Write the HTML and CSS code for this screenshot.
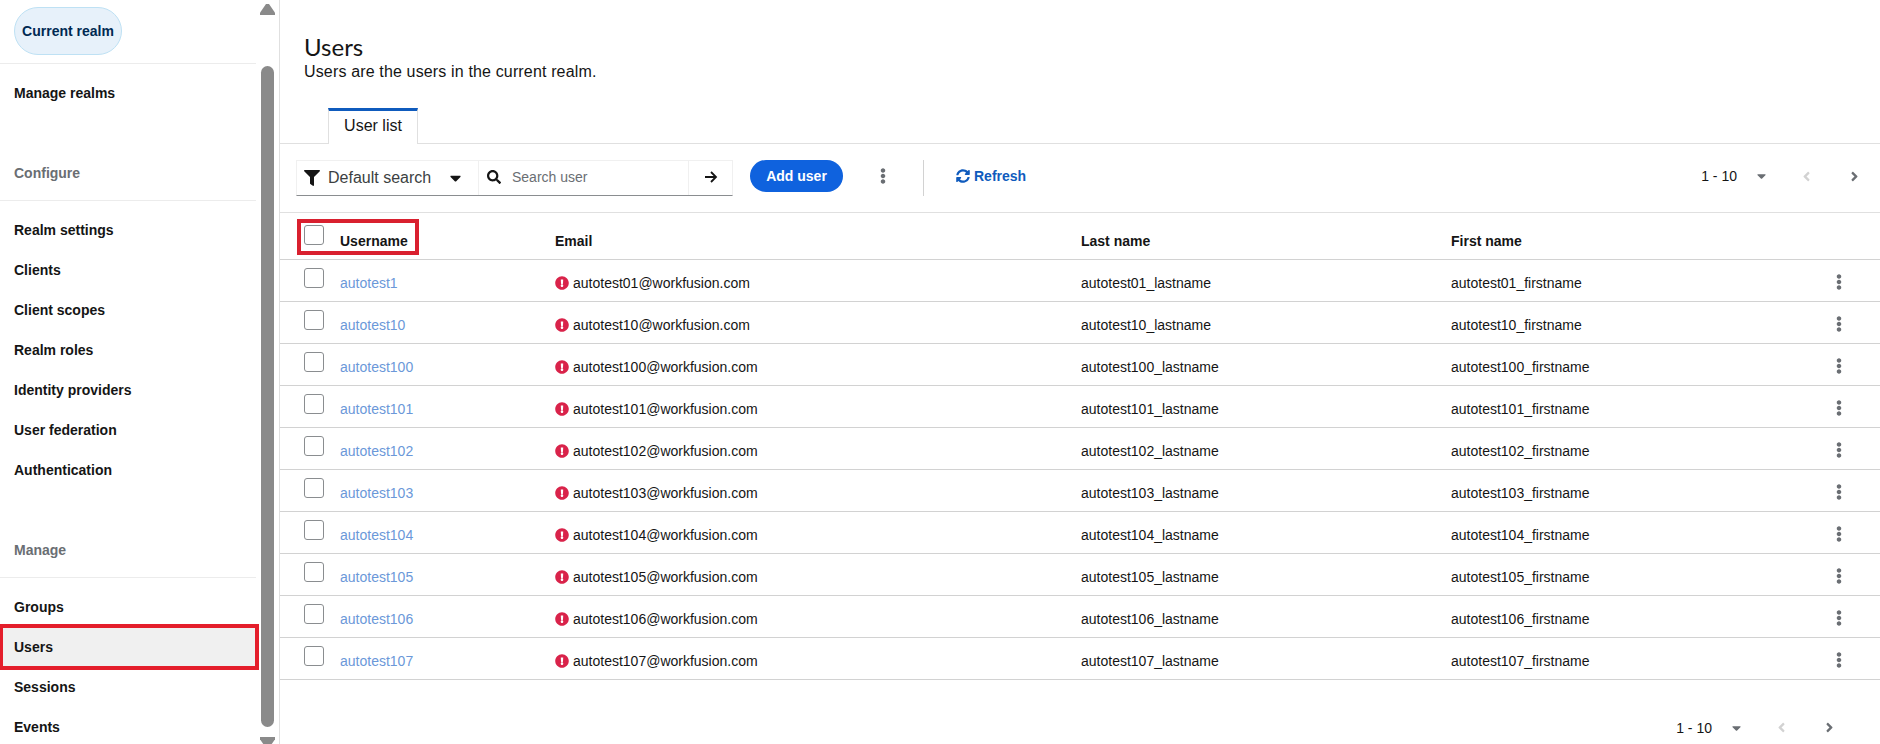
FILE: index.html
```html
<!DOCTYPE html>
<html lang="en">
<head>
  <meta charset="UTF-8" />
  <title>Users</title>
  <link rel="stylesheet" href="styles.css">
</head>
<body>
  <!-- icon sprite -->
  <svg class="sprite" xmlns="http://www.w3.org/2000/svg">
    <symbol id="i-filter" viewBox="0 0 512 512"><path d="M487.976 0H24.028C2.71 0-8.047 25.866 7.058 40.971L192 225.941V432c0 7.831 3.821 15.17 10.237 19.662l80 55.98C298.02 518.69 320 507.493 320 487.98V225.941l184.947-184.97C520.021 25.896 509.338 0 487.976 0z"/></symbol>
    <symbol id="i-search" viewBox="0 0 512 512"><path d="M505 442.7L405.3 343c-4.5-4.5-10.6-7-17-7H372c27.6-35.3 44-79.7 44-128C416 93.1 322.9 0 208 0S0 93.1 0 208s93.1 208 208 208c48.3 0 92.7-16.4 128-44v16.3c0 6.4 2.5 12.5 7 17l99.7 99.7c9.4 9.4 24.6 9.4 33.9 0l28.3-28.3c9.4-9.4 9.4-24.6.1-34zM208 336c-70.7 0-128-57.2-128-128 0-70.7 57.2-128 128-128 70.7 0 128 57.2 128 128 0 70.7-57.2 128-128 128z"/></symbol>
    <symbol id="i-arrow" viewBox="0 0 14 14"><path d="M1 7h11M7 2l5 5-5 5" fill="none" stroke="currentColor" stroke-width="1.8"/></symbol>
    <symbol id="i-caret" viewBox="0 0 320 512"><path d="M31.3 192h257.3c17.8 0 26.7 21.5 14.1 34.1L174.1 354.8c-7.8 7.8-20.5 7.8-28.3 0L17.2 226.1C4.6 213.5 13.5 192 31.3 192z"/></symbol>
    <symbol id="i-sync" viewBox="0 0 512 512"><path d="M370.72 133.28C339.458 104.008 298.888 87.962 255.848 88c-77.458.068-144.328 53.178-162.791 126.85-1.344 5.363-6.122 9.15-11.651 9.15H24.103c-7.498 0-13.194-6.807-11.807-14.176C33.933 94.924 134.813 8 256 8c66.448 0 126.791 26.136 171.315 68.685L463.03 40.97C478.149 25.851 504 36.559 504 57.941V192c0 13.255-10.745 24-24 24H345.941c-21.382 0-32.09-25.851-16.971-40.971l41.75-41.749zM32 296h134.059c21.382 0 32.09 25.851 16.971 40.971l-41.75 41.75c31.262 29.273 71.835 45.319 114.876 45.28 77.418-.07 144.315-53.144 162.787-126.849 1.344-5.363 6.122-9.15 11.651-9.15h57.304c7.498 0 13.194 6.807 11.807 14.176C478.067 417.076 377.187 504 256 504c-66.448 0-126.791-26.136-171.315-68.685L48.97 471.03C33.851 486.149 8 475.441 8 454.059V320c0-13.255 10.745-24 24-24z"/></symbol>
    <symbol id="i-kebab" viewBox="0 0 192 512"><path d="M96 184c39.8 0 72 32.2 72 72s-32.2 72-72 72-72-32.2-72-72 32.2-72 72-72zM24 80c0 39.8 32.2 72 72 72s72-32.2 72-72S135.8 8 96 8 24 40.2 24 80zm0 352c0 39.8 32.2 72 72 72s72-32.2 72-72-32.2-72-72-72-72 32.2-72 72z"/></symbol>
    <symbol id="i-alert" viewBox="0 0 512 512"><path d="M504 256c0 136.997-111.043 248-248 248S8 392.997 8 256C8 119.083 119.043 8 256 8s248 111.083 248 248zm-248 50c-25.405 0-46 20.595-46 46s20.595 46 46 46 46-20.595 46-46-20.595-46-46-46zm-43.673-165.346l7.418 136c.347 6.364 5.609 11.346 11.982 11.346h48.546c6.373 0 11.635-4.982 11.982-11.346l7.418-136c.375-6.874-5.098-12.654-11.982-12.654h-63.383c-6.884 0-12.356 5.78-11.981 12.654z"/></symbol>
    <symbol id="i-left" viewBox="0 0 256 512"><path d="M31.7 239l136-136c9.4-9.4 24.6-9.4 33.9 0l22.6 22.6c9.4 9.4 9.4 24.6 0 33.9L127.9 256l96.4 96.4c9.4 9.4 9.4 24.6 0 33.9L201.7 409c-9.4 9.4-24.6 9.4-33.9 0l-136-136c-9.5-9.4-9.5-24.6-.1-34z"/></symbol>
    <symbol id="i-right" viewBox="0 0 256 512"><path d="M224.3 273l-136 136c-9.4 9.4-24.6 9.4-33.9 0l-22.6-22.6c-9.4-9.4-9.4-24.6 0-33.9l96.4-96.4-96.4-96.4c-9.4-9.4-9.4-24.6 0-33.9L54.3 103c9.4-9.4 24.6-9.4 33.9 0l136 136c9.5 9.4 9.5 24.6.1 34z"/></symbol>
  </svg>

  <div class="page">
    <!-- Sidebar -->
    <aside class="sidebar">
      <nav class="nav">
        <div class="realm-box"><span class="realm-pill">Current realm</span></div>
        <a class="nav-item nav-first">Manage realms</a>

        <div class="nav-title">Configure</div>
        <a class="nav-item">Realm settings</a>
        <a class="nav-item">Clients</a>
        <a class="nav-item">Client scopes</a>
        <a class="nav-item">Realm roles</a>
        <a class="nav-item">Identity providers</a>
        <a class="nav-item">User federation</a>
        <a class="nav-item">Authentication</a>

        <div class="nav-title">Manage</div>
        <a class="nav-item">Groups</a>
        <a class="nav-item nav-current">Users</a>
        <a class="nav-item">Sessions</a>
        <a class="nav-item">Events</a>
      </nav>
      <div class="scrollbar">
        <span class="scroll-up"></span>
        <span class="scroll-thumb"></span>
        <span class="scroll-down"></span>
      </div>
    </aside>

    <!-- Main -->
    <main class="main">
      <header class="page-head">
        <h1>Users</h1>
        <p>Users are the users in the current realm.</p>
      </header>

      <div class="tabs">
        <div class="tab">User list</div>
      </div>

      <div class="toolbar">
        <div class="search-group">
          <div class="search-type">
            <svg class="icon filter-icon"><use href="#i-filter"/></svg>
            <span>Default search</span>
            <svg class="icon type-caret"><use href="#i-caret"/></svg>
          </div>
          <div class="search-input">
            <svg class="icon search-icon"><use href="#i-search"/></svg>
            <span>Search user</span>
          </div>
          <div class="search-go"><svg class="icon"><use href="#i-arrow"/></svg></div>
        </div>
        <button class="add-user">Add user</button>
        <svg class="icon kebab toolbar-kebab"><use href="#i-kebab"/></svg>
        <span class="toolbar-sep"></span>
        <a class="refresh"><svg class="icon"><use href="#i-sync"/></svg>Refresh</a>
        <div class="pager pager-top">
          <span>1 - 10</span>
          <svg class="icon pager-caret"><use href="#i-caret"/></svg>
          <svg class="icon pager-prev"><use href="#i-left"/></svg>
          <svg class="icon pager-next"><use href="#i-right"/></svg>
        </div>
      </div>

      <table class="users">
        <colgroup>
          <col class="col-check"><col class="col-name"><col class="col-email"><col class="col-last"><col class="col-first"><col class="col-menu">
        </colgroup>
        <thead>
          <tr>
            <th><span class="check"></span></th>
            <th>Username</th>
            <th>Email</th>
            <th>Last name</th>
            <th>First name</th>
            <th></th>
          </tr>
        </thead>
        <tbody>
          <tr><td><span class="check"></span></td><td><a>autotest1</a></td><td><svg class="icon alert"><use href="#i-alert"/></svg>autotest01@workfusion.com</td><td>autotest01_lastname</td><td>autotest01_firstname</td><td><svg class="icon kebab"><use href="#i-kebab"/></svg></td></tr>
          <tr><td><span class="check"></span></td><td><a>autotest10</a></td><td><svg class="icon alert"><use href="#i-alert"/></svg>autotest10@workfusion.com</td><td>autotest10_lastname</td><td>autotest10_firstname</td><td><svg class="icon kebab"><use href="#i-kebab"/></svg></td></tr>
          <tr><td><span class="check"></span></td><td><a>autotest100</a></td><td><svg class="icon alert"><use href="#i-alert"/></svg>autotest100@workfusion.com</td><td>autotest100_lastname</td><td>autotest100_firstname</td><td><svg class="icon kebab"><use href="#i-kebab"/></svg></td></tr>
          <tr><td><span class="check"></span></td><td><a>autotest101</a></td><td><svg class="icon alert"><use href="#i-alert"/></svg>autotest101@workfusion.com</td><td>autotest101_lastname</td><td>autotest101_firstname</td><td><svg class="icon kebab"><use href="#i-kebab"/></svg></td></tr>
          <tr><td><span class="check"></span></td><td><a>autotest102</a></td><td><svg class="icon alert"><use href="#i-alert"/></svg>autotest102@workfusion.com</td><td>autotest102_lastname</td><td>autotest102_firstname</td><td><svg class="icon kebab"><use href="#i-kebab"/></svg></td></tr>
          <tr><td><span class="check"></span></td><td><a>autotest103</a></td><td><svg class="icon alert"><use href="#i-alert"/></svg>autotest103@workfusion.com</td><td>autotest103_lastname</td><td>autotest103_firstname</td><td><svg class="icon kebab"><use href="#i-kebab"/></svg></td></tr>
          <tr><td><span class="check"></span></td><td><a>autotest104</a></td><td><svg class="icon alert"><use href="#i-alert"/></svg>autotest104@workfusion.com</td><td>autotest104_lastname</td><td>autotest104_firstname</td><td><svg class="icon kebab"><use href="#i-kebab"/></svg></td></tr>
          <tr><td><span class="check"></span></td><td><a>autotest105</a></td><td><svg class="icon alert"><use href="#i-alert"/></svg>autotest105@workfusion.com</td><td>autotest105_lastname</td><td>autotest105_firstname</td><td><svg class="icon kebab"><use href="#i-kebab"/></svg></td></tr>
          <tr><td><span class="check"></span></td><td><a>autotest106</a></td><td><svg class="icon alert"><use href="#i-alert"/></svg>autotest106@workfusion.com</td><td>autotest106_lastname</td><td>autotest106_firstname</td><td><svg class="icon kebab"><use href="#i-kebab"/></svg></td></tr>
          <tr><td><span class="check"></span></td><td><a>autotest107</a></td><td><svg class="icon alert"><use href="#i-alert"/></svg>autotest107@workfusion.com</td><td>autotest107_lastname</td><td>autotest107_firstname</td><td><svg class="icon kebab"><use href="#i-kebab"/></svg></td></tr>
        </tbody>
      </table>
      <!-- red annotation box from the screenshot -->
      <span class="mark-header"></span>

      <div class="pager pager-bottom">
        <span>1 - 10</span>
        <svg class="icon pager-caret"><use href="#i-caret"/></svg>
        <svg class="icon pager-prev"><use href="#i-left"/></svg>
        <svg class="icon pager-next"><use href="#i-right"/></svg>
      </div>
    </main>
  </div>
</body>
</html>
```
FILE: styles.css
```css
html, body {
  margin: 0;
  padding: 0;
  height: 100%;
  background: #fff;
  overflow: hidden;
  font-family: "Liberation Sans", Arial, sans-serif;
  font-size: 14px;
  color: #151515;
}

.sprite {
  display: none;
}

.icon {
  display: block;
  width: 14px;
  height: 14px;
  fill: currentColor;
  flex: none;
}

.page {
  display: flex;
  height: 744px;
  overflow: hidden;
}

/* Sidebar */
.sidebar {
  display: flex;
  flex: none;
  box-sizing: border-box;
  width: 280px;
  height: 744px;
  border-right: 1px solid #e0e0e0;
  overflow: hidden;
}

.nav {
  width: 256px;
  flex: none;
}

.realm-box {
  box-sizing: border-box;
  height: 64px;
  padding: 7px 0 0 14px;
  border-bottom: 1px solid #ececec;
}

.realm-pill {
  display: flex;
  align-items: center;
  justify-content: center;
  box-sizing: border-box;
  width: 108px;
  height: 48px;
  background: #e7f1fa;
  border: 1px solid #bee1f4;
  border-radius: 24px;
  color: #002952;
  font-weight: bold;
  font-size: 14px;
}

.nav-item {
  display: flex;
  align-items: center;
  box-sizing: border-box;
  height: 40px;
  padding: 1px 0 0 14px;
  font-weight: bold;
}

.nav-first {
  margin-top: 8px;
}

.nav-title {
  box-sizing: border-box;
  height: 49px;
  margin-top: 40px;
  margin-bottom: 8px;
  padding: 13px 0 0 14px;
  border-bottom: 1px solid #ececec;
  color: #6a6e73;
  font-weight: bold;
}

.nav-item.nav-current {
  width: 259px;
  height: 46px;
  margin: -2px 0 -4px;
  padding: 0 0 0 11px;
  background: #f0f0f0;
  border: 4px solid #e41e2b;
  border-left-width: 3px;
}

.scrollbar {
  display: flex;
  flex-direction: column;
  align-items: center;
  width: 23px;
}

.scroll-up,
.scroll-down {
  width: 15px;
  flex: none;
  background: #8a8a8a;
}

.scroll-up {
  height: 11px;
  margin-top: 4px;
  clip-path: polygon(40% 0, 60% 0, 100% 80%, 100% 100%, 0 100%, 0 80%);
}

.scroll-thumb {
  width: 13px;
  height: 661px;
  margin-top: 51px;
  background: #8a8a8a;
  border-radius: 7px;
  flex: none;
}

.scroll-down {
  height: 11px;
  margin-top: 10px;
  clip-path: polygon(0 0, 100% 0, 100% 20%, 60% 100%, 40% 100%, 0 20%);
}

/* Main */
.main {
  position: relative;
  flex: 1;
  min-width: 0;
}

.page-head {
  box-sizing: border-box;
  height: 108px;
  padding: 33px 0 0 24px;
}

.page-head h1 {
  margin: 0;
  font-family: Lato, sans-serif;
  font-size: 24px;
  font-weight: 400;
  line-height: 28px;
}

.page-head p {
  margin: 1px 0 0;
  font-size: 16px;
  line-height: 20px;
  letter-spacing: 0.15px;
}

.tabs {
  box-sizing: border-box;
  display: flex;
  height: 36px;
  padding-left: 48px;
  border-bottom: 1px solid #e0e0e0;
}

.tab {
  box-sizing: border-box;
  width: 90px;
  height: 36px;
  border-top: 3px solid #0f5bbd;
  border-left: 1px solid #e0e0e0;
  border-right: 1px solid #e0e0e0;
  background: #fff;
  text-align: center;
  font-size: 16px;
  line-height: 30px;
}

.toolbar {
  display: flex;
  align-items: flex-start;
  box-sizing: border-box;
  height: 69px;
  padding: 16px 0 0 16px;
  border-bottom: 1px solid #e0e0e0;
}

.search-group {
  display: flex;
  box-sizing: border-box;
  width: 437px;
  height: 36px;
  border-top: 1px solid #f0f0f0;
  border-bottom: 1px solid #8a8d90;
  border-left: 1px solid #f0f0f0;
  border-right: 1px solid #f0f0f0;
}

.search-type {
  display: flex;
  align-items: center;
  box-sizing: border-box;
  width: 182px;
  padding-left: 7px;
  border-right: 1px solid #f0f0f0;
  font-size: 16px;
  color: #3c3f42;
}

.filter-icon {
  width: 16px;
  height: 16px;
  margin-right: 8px;
  color: #151515;
}

.type-caret {
  width: 11px;
  height: 18px;
  margin-left: 19px;
  color: #151515;
}

.search-input {
  display: flex;
  align-items: center;
  box-sizing: border-box;
  width: 210px;
  padding: 0 0 2px 8px;
  border-right: 1px solid #f0f0f0;
  color: #6a6e73;
}

.search-icon {
  margin-right: 11px;
  color: #151515;
}

.search-go {
  display: flex;
  align-items: center;
  justify-content: center;
  flex: 1;
  padding-bottom: 3px;
}

.add-user {
  width: 93px;
  height: 32px;
  margin-left: 17px;
  padding: 0;
  background: #0f62de;
  border: 0;
  border-radius: 16px;
  color: #fff;
  font: bold 14px "Liberation Sans", Arial, sans-serif;
}

.kebab {
  width: 6px;
  height: 16px;
  color: #6a6e73;
}

.toolbar-kebab {
  margin: 8px 0 0 37px;
}

.toolbar-sep {
  width: 1px;
  height: 36px;
  margin-left: 37px;
  background: #d2d2d2;
}

.refresh {
  display: flex;
  align-items: center;
  gap: 4px;
  height: 32px;
  margin-left: 32px;
  color: #0f5bbd;
  font-weight: bold;
}

.pager {
  display: flex;
  align-items: center;
  height: 32px;
  color: #151515;
}

.pager-top {
  margin-left: auto;
  padding-right: 21px;
}

.pager-bottom {
  justify-content: flex-end;
  margin-top: 32px;
  padding-right: 46px;
}

.pager-caret {
  width: 9px;
  height: 14px;
  margin-left: 20px;
  color: #6a6e73;
}

.pager-prev,
.pager-next {
  width: 9px;
  height: 15px;
}

.pager-prev {
  margin-left: 36px;
  color: #d2d2d2;
}

.pager-next {
  margin-left: 39px;
  color: #6a6e73;
}

/* Table */
.users {
  width: 100%;
  table-layout: fixed;
  border-collapse: collapse;
}

.col-check { width: 60px; }
.col-name { width: 215px; }
.col-email { width: 526px; }
.col-last { width: 370px; }
.col-first { width: 369px; }
.col-menu { width: 60px; }

.users th,
.users td {
  padding: 0;
  text-align: left;
  border-bottom: 1px solid #d2d2d2;
}

.users th {
  height: 46px;
  padding-top: 10px;
  box-sizing: border-box;
  font-weight: bold;
}

.users td {
  box-sizing: border-box;
  height: 42px;
  padding-top: 6px;
}

.users a {
  color: #6b98d9;
}

.check {
  display: block;
  box-sizing: border-box;
  width: 20px;
  height: 20px;
  margin: -10px 0 0 24px;
  background: #fff;
  border: 1px solid #8a8d90;
  border-radius: 3px;
}

.users th .check {
  margin-top: -12px;
}

.alert {
  display: inline-block;
  width: 14px;
  height: 14px;
  margin-right: 4px;
  vertical-align: -2px;
  color: #d9234a;
}

.users td .kebab {
  margin-left: 16px;
  margin-top: -3px;
}

.mark-header {
  position: absolute;
  left: 17px;
  top: 219px;
  width: 122px;
  height: 36px;
  box-sizing: border-box;
  border: 4px solid #d9202f;
}
```
